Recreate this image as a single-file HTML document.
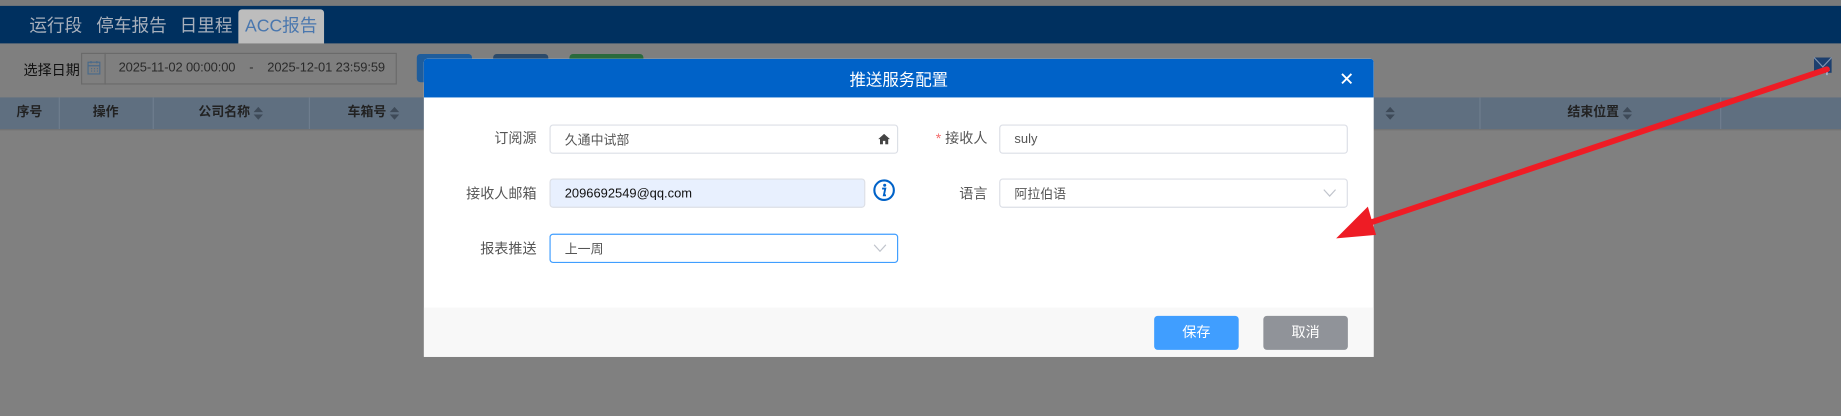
<!DOCTYPE html>
<html><head><meta charset="utf-8"><style>
html,body{margin:0;padding:0;width:1841px;height:415px;overflow:hidden;background:#808080}
#w{position:absolute;left:0;top:0;width:1568px;height:354px;transform:scale(1.17411);transform-origin:0 0;font-family:"Liberation Sans","Noto Sans CJK SC",sans-serif;background:#808080}
.a{position:absolute}
.nav{left:0;top:5px;width:1568px;height:32px;background:#00305f}
.tab{top:8px;height:29px;line-height:29px;font-size:15px;color:#a8b0bc}
.th{top:83px;height:27px;line-height:27px;background:#5f6f80;font-size:11px;font-weight:bold;color:#222;text-align:center}
.sep{top:83px;width:1px;height:27px;background:#6f7e8e}
.lab{font-size:12px;color:#555;text-align:right;width:90px;line-height:16px}
.inp{box-sizing:border-box;border:1px solid #dcdfe6;border-radius:3px;background:#fff;font-size:11px;color:#555;padding-left:12px;display:flex;align-items:center}
.chev{position:absolute;right:9px;top:8px}
.srt{display:inline-block;vertical-align:middle;margin-left:3px}
</style></head><body><div id="w">
<div class="a" style="left:0;top:0;width:1568px;height:5px;background:#7a7a7a"></div>
<div class="a nav"></div>
<div class="a tab" style="left:25px">运行段</div>
<div class="a tab" style="left:82px">停车报告</div>
<div class="a tab" style="left:153px">日里程</div>
<div class="a tab" style="left:203px;width:73px;background:#bdbdbd;border-radius:3px 3px 0 0;color:#4a77ae;text-align:center">ACC报告</div>
<div class="a" style="left:0;top:37px;width:1568px;height:40px;background:#7f7f7f"></div>
<div class="a" style="left:20px;top:51px;font-size:12px;color:#111">选择日期</div>
<div class="a" style="left:69px;top:45px;width:269px;height:27px;border:1px solid #6a6a6a;box-sizing:border-box"></div>
<div class="a" style="left:89px;top:45px;width:1px;height:27px;background:#6a6a6a"></div>
<svg class="a" style="left:74px;top:51px" width="12" height="13" viewBox="0 0 12 13"><rect x="1" y="2" width="10" height="10" fill="none" stroke="#4a6a8a"/><path d="M1 5H11M3.5 7.5h1M6 7.5h1M8.5 7.5h1M3.5 9.5h1M6 9.5h1M8.5 9.5h1M3.5 1v2M8.5 1v2" stroke="#4a6a8a"/></svg>
<div class="a" style="left:101px;top:52px;font-size:11px;color:#2a2a2a;white-space:pre;letter-spacing:-0.1px">2025-11-02 00:00:00    -    2025-12-01 23:59:59</div>
<div class="a" style="left:355px;top:46px;width:47px;height:24px;background:#1f5d9c;border-radius:3px"></div>
<div class="a" style="left:420px;top:46px;width:47px;height:24px;background:#2c4a6a;border-radius:3px"></div>
<div class="a" style="left:485px;top:46px;width:63px;height:24px;background:#2a6a3c;border-radius:3px"></div>
<div class="a th" style="left:0;width:1568px"></div>
<div class="a th" style="left:0;width:50px">序号</div>
<div class="a th" style="left:50px;width:80px">操作</div>
<div class="a th" style="left:130px;width:133px">公司名称<svg class="srt" width="8" height="11" viewBox="0 0 8 11"><path d="M0 4.5L4 0L8 4.5ZM0 6.5L4 11L8 6.5Z" fill="#3e4a58"/></svg></div>
<div class="a th" style="left:263px;width:110px">车箱号<svg class="srt" width="8" height="11" viewBox="0 0 8 11"><path d="M0 4.5L4 0L8 4.5ZM0 6.5L4 11L8 6.5Z" fill="#3e4a58"/></svg></div>
<div class="a th" style="left:1172px;width:20px;background:none"><svg class="srt" width="8" height="11" viewBox="0 0 8 11"><path d="M0 4.5L4 0L8 4.5ZM0 6.5L4 11L8 6.5Z" fill="#3e4a58"/></svg></div>
<div class="a th" style="left:1260px;width:205px">结束位置<svg class="srt" width="8" height="11" viewBox="0 0 8 11"><path d="M0 4.5L4 0L8 4.5ZM0 6.5L4 11L8 6.5Z" fill="#3e4a58"/></svg></div>
<div class="a sep" style="left:50px"></div><div class="a sep" style="left:130px"></div><div class="a sep" style="left:263px"></div><div class="a sep" style="left:1260px"></div><div class="a sep" style="left:1465px"></div>
<div class="a" style="left:0;top:110px;width:1568px;height:1px;background:#727272"></div>
<svg class="a" style="left:1544px;top:47px" width="18" height="18" viewBox="0 0 18 18"><rect x="1" y="2" width="15" height="13" fill="#1d3f6e"/><path d="M1 2 L8.5 10 L16 2" stroke="#7f93b0" fill="none"/><path d="M12 17V12M10 13.5L12 11L14 13.5" stroke="#9fb3cf" stroke-width="1.5" fill="none"/></svg>
<div class="a" style="left:361px;top:50px;width:809px;height:254px;background:#fff;border-radius:3px 3px 0 0;overflow:hidden">
<div class="a" style="left:0;top:0;width:809px;height:33px;background:#0062c8"></div>
<div class="a" style="left:0;top:8px;width:809px;text-align:center;color:#fff;font-size:14px">推送服务配置</div>
<svg class="a" style="left:781px;top:12px" width="10" height="10" viewBox="0 0 10 10"><path d="M1 1L9 9M9 1L1 9" stroke="#fff" stroke-width="1.6"/></svg>
<div class="a" style="left:0;top:212px;width:809px;height:42px;background:#f8f8f8"></div>
</div>
<div class="a lab" style="left:367px;top:110px">订阅源</div>
<div class="a inp" style="left:468px;top:106px;width:297px;height:25px">久通中试部<svg style="position:absolute;right:6px;top:7px" width="10" height="9" viewBox="0 0 10 9"><path d="M5 0L0 4.5H1.5V9H4V6H6V9H8.5V4.5H10Z" fill="#444"/></svg></div>
<div class="a lab" style="left:751px;top:110px"><span style="color:#f56c6c">* </span>接收人</div>
<div class="a inp" style="left:851px;top:106px;width:297px;height:25px">suly</div>
<div class="a lab" style="left:367px;top:157px">接收人邮箱</div>
<div class="a inp" style="left:468px;top:152px;width:269px;height:25px;background:#e8f0fe;color:#111">2096692549@qq.com</div>
<svg class="a" style="left:743px;top:152px" width="20" height="20" viewBox="0 0 20 20"><circle cx="10" cy="10" r="8.3" stroke="#0062c8" stroke-width="1.8" fill="none"/><circle cx="10.5" cy="5.8" r="1.3" fill="#0062c8"/><path d="M8.3 8.6H11L9.8 14.3H11.6" stroke="#0062c8" stroke-width="1.6" fill="none"/></svg>
<div class="a lab" style="left:751px;top:157px">语言</div>
<div class="a inp" style="left:851px;top:152px;width:297px;height:25px">阿拉伯语<svg class="chev" width="11" height="7" viewBox="0 0 11 7"><path d="M0.5 0.5L5.5 6L10.5 0.5" stroke="#c0c4cc" fill="none"/></svg></div>
<div class="a lab" style="left:367px;top:204px">报表推送</div>
<div class="a inp" style="left:468px;top:199px;width:297px;height:25px;border-color:#409eff">上一周<svg class="chev" width="11" height="7" viewBox="0 0 11 7"><path d="M0.5 0.5L5.5 6L10.5 0.5" stroke="#c0c4cc" fill="none"/></svg></div>
<div class="a" style="left:983px;top:269px;width:72px;height:29px;background:#409eff;border-radius:3px;color:#fff;font-size:12px;text-align:center;line-height:29px">保存</div>
<div class="a" style="left:1076px;top:269px;width:72px;height:29px;background:#909399;border-radius:3px;color:#fff;font-size:12px;text-align:center;line-height:29px">取消</div>
<svg class="a" style="left:0;top:0" width="1568" height="354"><line x1="1556" y1="59" x2="1160" y2="192" stroke="#ee1c25" stroke-width="5" stroke-linecap="round"/><polygon points="1138,203 1165,176 1172,200" fill="#ee1c25"/></svg>
</div></body></html>
